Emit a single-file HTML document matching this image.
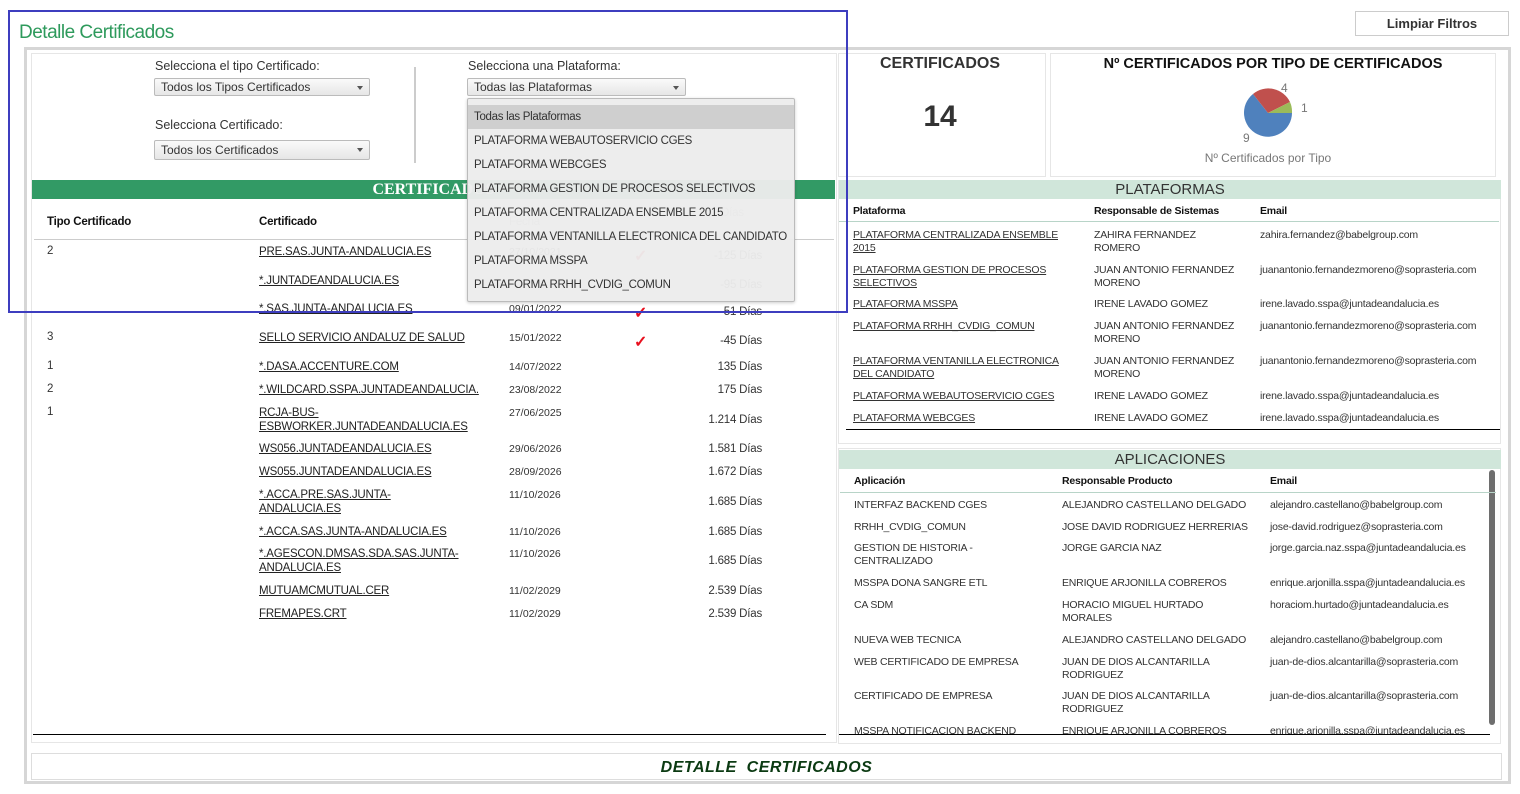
<!DOCTYPE html>
<html><head><meta charset="utf-8"><style>
*{margin:0;padding:0;box-sizing:border-box}
body{width:1520px;height:794px;background:#fff;font-family:"Liberation Sans",sans-serif;color:#333;position:relative;overflow:hidden}
.a{position:absolute;white-space:nowrap}
.u{text-decoration:underline;color:#222}
.t{font-size:11.5px;letter-spacing:-0.2px}
.r{font-size:10.5px;letter-spacing:-0.2px;line-height:13px;color:#333}
.sel{position:absolute;height:18px;border:1px solid #bbb;border-radius:2px;background:linear-gradient(#fafafa,#e6e6e6);font-size:12px;padding:1px 6px;color:#333}
.sel:after{content:"";position:absolute;right:6px;top:7px;border:3.5px solid transparent;border-top:4px solid #555}
.dd div{height:24px;line-height:24px;padding-left:6px;font-size:11.5px;letter-spacing:-0.3px;color:#333}
</style></head><body>
<div class="a" style="left:19px;top:22px;font-size:19px;color:#2e9a5c;letter-spacing:-0.5px">Detalle Certificados</div>
<div class="a" style="left:1355px;top:11px;width:154px;height:25px;border:1px solid #ccc;font-size:13px;font-weight:bold;color:#333;text-align:center;line-height:24px">Limpiar Filtros</div>
<div class="a" style="left:24px;top:47px;width:1487px;height:737px;border:3px solid #d6d6d6"></div>
<div class="a" style="left:31px;top:53px;width:806px;height:690px;border:1px solid #e6e6e6"></div>
<div class="a" style="left:155px;top:59px;font-size:12.5px">Selecciona el tipo Certificado:</div>
<div class="sel" style="left:154px;top:78px;width:216px">Todos los Tipos Certificados</div>
<div class="a" style="left:155px;top:118px;font-size:12.5px">Selecciona Certificado:</div>
<div class="sel" style="left:154px;top:140px;width:216px;height:20px;padding-top:2px">Todos los Certificados</div>
<div class="a" style="left:414px;top:67px;width:2px;height:96px;background:#ccc"></div>
<div class="a" style="left:468px;top:59px;font-size:12.5px">Selecciona una Plataforma:</div>
<div class="sel" style="left:467px;top:78px;width:219px">Todas las Plataformas</div>
<div class="a" style="left:32px;top:180px;width:803px;height:19px;background:#329a65;color:#fff;font-family:'Liberation Serif',serif;font-weight:bold;font-size:16px;text-align:center;line-height:19px">CERTIFICADOS</div>
<div class="a t" style="left:47px;top:216px;font-weight:bold;color:#111">Tipo Certificado</div>
<div class="a t" style="left:259px;top:216px;font-weight:bold;color:#111">Certificado</div>
<div class="a t" style="left:509px;top:216px;color:#999">Fecha</div>
<div class="a t" style="left:721px;top:207px;color:#999">Días</div>
<div class="a" style="left:34px;top:239px;width:800px;height:1px;background:#ccc"></div>
<div class="a" style="left:33px;top:734px;width:793px;height:1px;background:#000"></div>
<div id="rows"></div>
<div class="a" style="left:31px;top:753px;width:1471px;height:27px;border:1px solid #ddd;text-align:center;font-size:16px;font-weight:bold;font-style:italic;color:#0b3a12;line-height:27px;letter-spacing:0.5px">DETALLE &nbsp;CERTIFICADOS</div>
<div class="a" style="left:838px;top:53px;width:208px;height:124px;border:1px solid #e6e6e6"></div>
<div class="a" style="left:840px;top:55px;width:200px;text-align:center;font-size:16px;font-weight:bold;color:#333">CERTIFICADOS</div>
<div class="a" style="left:840px;top:100px;width:200px;text-align:center;font-size:30px;font-weight:bold;color:#333">14</div>
<div class="a" style="left:1050px;top:53px;width:446px;height:124px;border:1px solid #e6e6e6"></div>
<div class="a" style="left:1050px;top:56px;width:446px;text-align:center;font-size:14.5px;font-weight:bold;color:#111">Nº CERTIFICADOS POR TIPO DE CERTIFICADOS</div>
<svg class="a" style="left:1230px;top:78px" width="90" height="70" viewBox="1230 78 90 70">
<path d="M1268 113 L1292 113 A24 24 0 1 1 1253 94 Z" fill="#4f81bd"/>
<path d="M1268 113 L1253 94 A24 24 0 0 1 1290 102 Z" fill="#c0504d"/>
<path d="M1268 113 L1290 102 A24 24 0 0 1 1292 113 Z" fill="#9bbb59"/>
<text x="1281" y="92" font-size="12" fill="#777" font-family="Liberation Sans">4</text>
<text x="1301" y="112" font-size="12" fill="#777" font-family="Liberation Sans">1</text>
<text x="1243" y="142" font-size="12" fill="#777" font-family="Liberation Sans">9</text>
</svg>
<div class="a" style="left:1050px;top:151px;width:436px;text-align:center;font-size:12px;color:#777">Nº Certificados por Tipo</div>
<div class="a" style="left:838px;top:180px;width:663px;height:264px;border:1px solid #e6e6e6"></div>
<div class="a" style="left:839px;top:180px;width:662px;height:19px;background:#d0e6da;text-align:center;font-size:15px;line-height:20px;color:#333">PLATAFORMAS</div>
<div class="a r" style="left:853px;top:205px;font-weight:bold;color:#111">Plataforma</div>
<div class="a r" style="left:1094px;top:205px;font-weight:bold;color:#111">Responsable de Sistemas</div>
<div class="a r" style="left:1260px;top:205px;font-weight:bold;color:#111">Email</div>
<div class="a" style="left:839px;top:221px;width:660px;height:1px;background:#b8d4c8"></div>
<div id="plat"></div>
<div class="a" style="left:846px;top:429px;width:654px;height:1px;background:#000"></div>
<div class="a" style="left:838px;top:448px;width:663px;height:296px;border:1px solid #e6e6e6"></div>
<div class="a" style="left:839px;top:450px;width:662px;height:19px;background:#d0e6da;text-align:center;font-size:15px;line-height:20px;color:#333">APLICACIONES</div>
<div class="a" style="left:1489px;top:470px;width:6px;height:255px;background:#6e6e6e;border-radius:3px"></div>
<div class="a r" style="left:854px;top:475px;font-weight:bold;color:#111">Aplicación</div>
<div class="a r" style="left:1062px;top:475px;font-weight:bold;color:#111">Responsable Producto</div>
<div class="a r" style="left:1270px;top:475px;font-weight:bold;color:#111">Email</div>
<div class="a" style="left:840px;top:492px;width:656px;height:1px;background:#b8d4c8"></div>
<div style="position:absolute;left:0;top:0;width:1520px;height:734px;overflow:hidden" id="apps"></div>
<div class="a" style="left:839px;top:734px;width:651px;height:1px;background:#000"></div>
<div class="a dd" style="left:467px;top:98px;width:328px;height:204px;border:1px solid #bbb;border-radius:2px;background:rgba(236,236,236,0.96);box-shadow:0 1px 3px rgba(0,0,0,0.2);padding-top:6px">
<div style="background:#cfcfcf">Todas las Plataformas</div>
<div>PLATAFORMA WEBAUTOSERVICIO CGES</div>
<div>PLATAFORMA WEBCGES</div>
<div>PLATAFORMA GESTION DE PROCESOS SELECTIVOS</div>
<div>PLATAFORMA CENTRALIZADA ENSEMBLE 2015</div>
<div>PLATAFORMA VENTANILLA ELECTRONICA DEL CANDIDATO</div>
<div>PLATAFORMA MSSPA</div>
<div>PLATAFORMA RRHH_CVDIG_COMUN</div>
</div>
<div class="a" style="left:8px;top:10px;width:840px;height:303px;border:2px solid #3d3dbf"></div>
<script>
var R=[
[245,'2','PRE.SAS.JUNTA-ANDALUCIA.ES','','27/10/2021',1,'-125 Días',250],
[274,'','*.JUNTADEANDALUCIA.ES','','',0,'-95 Días',279],
[302,'','*.SAS.JUNTA-ANDALUCIA.ES','','09/01/2022',1,'-51 Días',306],
[331,'3','SELLO SERVICIO ANDALUZ DE SALUD','','15/01/2022',1,'-45 Días',335],
[360,'1','*.DASA.ACCENTURE.COM','','14/07/2022',0,'135 Días',361],
[383,'2','*.WILDCARD.SSPA.JUNTADEANDALUCIA.','','23/08/2022',0,'175 Días',384],
[406,'1','RCJA-BUS-','ESBWORKER.JUNTADEANDALUCIA.ES','27/06/2025',0,'1.214 Días',414],
[442,'','WS056.JUNTADEANDALUCIA.ES','','29/06/2026',0,'1.581 Días',443],
[465,'','WS055.JUNTADEANDALUCIA.ES','','28/09/2026',0,'1.672 Días',466],
[488,'','*.ACCA.PRE.SAS.JUNTA-','ANDALUCIA.ES','11/10/2026',0,'1.685 Días',496],
[525,'','*.ACCA.SAS.JUNTA-ANDALUCIA.ES','','11/10/2026',0,'1.685 Días',526],
[547,'','*.AGESCON.DMSAS.SDA.SAS.JUNTA-','ANDALUCIA.ES','11/10/2026',0,'1.685 Días',555],
[584,'','MUTUAMCMUTUAL.CER','','11/02/2029',0,'2.539 Días',585],
[607,'','FREMAPES.CRT','','11/02/2029',0,'2.539 Días',608]];
var h='';R.forEach(function(r){var y=r[0];
h+='<div class="a t" style="left:47px;top:'+y+'px">'+r[1]+'</div>';
h+='<div class="a t u" style="left:259px;top:'+y+'px;line-height:14px">'+r[2]+(r[3]?'<br>'+r[3]:'')+'</div>';
if(r[4])h+='<div class="a" style="left:509px;top:'+(y+1)+'px;font-size:10.5px;color:#333">'+r[4]+'</div>';
if(r[5])h+='<div class="a" style="left:634px;top:'+(y+1)+'px;font-size:16px;color:#e8101e;font-weight:bold">✓</div>';
h+='<div class="a t" style="left:662px;width:100px;text-align:right;top:'+r[7]+'px">'+r[6]+'</div>';});
document.getElementById('rows').innerHTML=h;
var P=[[229,'PLATAFORMA CENTRALIZADA ENSEMBLE<br>2015','ZAHIRA FERNANDEZ<br>ROMERO','zahira.fernandez@babelgroup.com'],
[264,'PLATAFORMA GESTION DE PROCESOS<br>SELECTIVOS','JUAN ANTONIO FERNANDEZ<br>MORENO','juanantonio.fernandezmoreno@soprasteria.com'],
[298,'PLATAFORMA MSSPA','IRENE LAVADO GOMEZ','irene.lavado.sspa@juntadeandalucia.es'],
[320,'PLATAFORMA RRHH_CVDIG_COMUN','JUAN ANTONIO FERNANDEZ<br>MORENO','juanantonio.fernandezmoreno@soprasteria.com'],
[355,'PLATAFORMA VENTANILLA ELECTRONICA<br>DEL CANDIDATO','JUAN ANTONIO FERNANDEZ<br>MORENO','juanantonio.fernandezmoreno@soprasteria.com'],
[390,'PLATAFORMA WEBAUTOSERVICIO CGES','IRENE LAVADO GOMEZ','irene.lavado.sspa@juntadeandalucia.es'],
[412,'PLATAFORMA WEBCGES','IRENE LAVADO GOMEZ','irene.lavado.sspa@juntadeandalucia.es']];
h='';P.forEach(function(p){h+='<div class="a r u" style="left:853px;top:'+p[0]+'px">'+p[1]+'</div><div class="a r" style="left:1094px;top:'+p[0]+'px">'+p[2]+'</div><div class="a r" style="left:1260px;top:'+p[0]+'px">'+p[3]+'</div>';});
document.getElementById('plat').innerHTML=h;
var A=[[499,'INTERFAZ BACKEND CGES','ALEJANDRO CASTELLANO DELGADO','alejandro.castellano@babelgroup.com'],
[521,'RRHH_CVDIG_COMUN','JOSE DAVID RODRIGUEZ HERRERIAS','jose-david.rodriguez@soprasteria.com'],
[542,'GESTION DE HISTORIA -<br>CENTRALIZADO','JORGE GARCIA NAZ','jorge.garcia.naz.sspa@juntadeandalucia.es'],
[577,'MSSPA DONA SANGRE ETL','ENRIQUE ARJONILLA COBREROS','enrique.arjonilla.sspa@juntadeandalucia.es'],
[599,'CA SDM','HORACIO MIGUEL HURTADO<br>MORALES','horaciom.hurtado@juntadeandalucia.es'],
[634,'NUEVA WEB TECNICA','ALEJANDRO CASTELLANO DELGADO','alejandro.castellano@babelgroup.com'],
[656,'WEB CERTIFICADO DE EMPRESA','JUAN DE DIOS ALCANTARILLA<br>RODRIGUEZ','juan-de-dios.alcantarilla@soprasteria.com'],
[690,'CERTIFICADO DE EMPRESA','JUAN DE DIOS ALCANTARILLA<br>RODRIGUEZ','juan-de-dios.alcantarilla@soprasteria.com'],
[725,'MSSPA NOTIFICACION BACKEND','ENRIQUE ARJONILLA COBREROS','enrique.arjonilla.sspa@juntadeandalucia.es']];
h='';A.forEach(function(p){h+='<div class="a r" style="left:854px;top:'+p[0]+'px">'+p[1]+'</div><div class="a r" style="left:1062px;top:'+p[0]+'px">'+p[2]+'</div><div class="a r" style="left:1270px;top:'+p[0]+'px">'+p[3]+'</div>';});
document.getElementById('apps').innerHTML=h;
</script>
</body></html>
